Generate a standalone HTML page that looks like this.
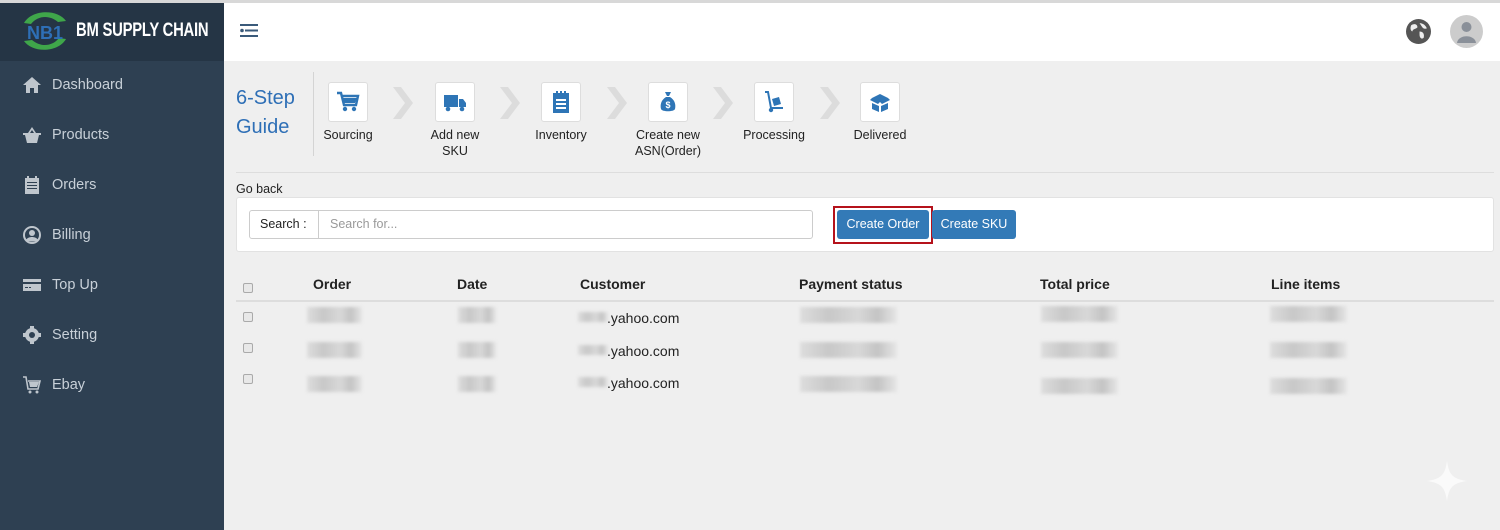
<!DOCTYPE html>
<html><head><meta charset="utf-8"><style>
*{box-sizing:border-box;margin:0;padding:0}
body{width:1500px;height:530px;overflow:hidden;background:#efefef;font-family:"Liberation Sans",Arial,sans-serif;position:relative}
.a{position:absolute}
#top{left:0;top:0;width:1500px;height:3px;background:#d8d8d8}
#side{left:0;top:3px;width:224px;height:527px;background:#2e4052}
#logo{left:0;top:3px;width:224px;height:58px;background:#253545}
.nav{position:absolute;left:22px;color:#c8d0d8;font-size:14.5px;display:flex;align-items:center}
.nav svg{width:20px;height:20px;margin-right:10px;fill:#bfc6cd}
#hdr{left:224px;top:3px;width:1276px;height:58px;background:#fff}
.step{position:absolute;top:82px;text-align:center;font-size:12.5px;color:#222;width:90px;line-height:16px}
.box{width:40px;height:40px;margin:0 auto 5px;background:#fff;border:1px solid #ddd;border-radius:3px;display:flex;align-items:center;justify-content:center}
.box svg{width:24px;height:24px;fill:#2e75b6}
.chev{position:absolute;top:86px;width:22px;height:34px}
.th{position:absolute;top:276px;font-weight:bold;font-size:14px;color:#222}
.cb{position:absolute;left:243px;width:10px;height:10px;border:1px solid #aaa;border-radius:2px;background:#e8e8e8}
.bl{position:absolute;height:16px;background:linear-gradient(90deg,#ddd,#c8c8c8 30%,#d8d8d8 60%,#c4c4c4 80%,#e6e6e6);filter:blur(1.5px)}
.em{position:absolute;font-size:14px;color:#222}
</style></head><body>
<div class="a" id="top"></div>
<div class="a" id="side"></div>
<div class="a" id="logo"></div>
<svg class="a" style="left:18px;top:9px" width="54" height="44" viewBox="0 0 54 44"><path d="M6 14 C14 0 40 0 48 12 L40 13 C32 6 20 6 13 15Z" fill="#3fa64a"/><path d="M48 30 C40 44 14 44 6 32 L14 31 C22 38 34 38 41 29Z" fill="#3fa64a"/><text x="9" y="30" font-family="Liberation Sans" font-weight="bold" font-size="18" fill="#2e6fb6" textLength="36" lengthAdjust="spacingAndGlyphs">NB1</text></svg>
<div class="a" style="left:76px;top:20px;color:#fff;font-weight:bold;font-size:19px;letter-spacing:-0.3px;transform:scaleX(0.78);transform-origin:left;white-space:nowrap">BM SUPPLY CHAIN</div>

<div class="nav" style="top:75px"><svg viewBox="0 0 20 20"><path d="M10 2 L1 10 H4 V18 H8 V13 H12 V18 H16 V10 H19Z"/></svg>Dashboard</div>
<div class="nav" style="top:125px"><svg viewBox="0 0 20 20"><path d="M1 8 H19 V10 H17 L15 18 H5 L3 10 H1Z M6 8 L10 2 L14 8 H12 L10 5 L8 8Z"/></svg>Products</div>
<div class="nav" style="top:175px"><svg viewBox="0 0 20 20"><path d="M3 3 H17 V19 H3Z M5 1 H7 V4 H5Z M13 1 H15 V4 H13Z" /><path d="M5 7 H15 V8 H5Z M5 10 H15 V11 H5Z M5 13 H15 V14 H5Z" fill="#2e4052"/></svg>Orders</div>
<div class="nav" style="top:225px"><svg viewBox="0 0 20 20"><circle cx="10" cy="10" r="9"/><circle cx="10" cy="10" r="7" fill="#2e4052"/><circle cx="10" cy="8" r="3"/><path d="M4 15 C6 11 14 11 16 15 C14 17 6 17 4 15Z"/></svg>Billing</div>
<div class="nav" style="top:275px"><svg viewBox="0 0 20 20"><path d="M1 4 H19 V16 H1Z"/><path d="M1 7 H19 V9 H1Z M3 12 H6 V13 H3Z M7 12 H9 V13 H7Z" fill="#2e4052"/></svg>Top Up</div>
<div class="nav" style="top:325px"><svg viewBox="0 0 20 20"><circle cx="10" cy="10" r="7"/><path d="M8 1H12V5H8Z M8 15H12V19H8Z M1 8H5V12H1Z M15 8H19V12H15Z" /><circle cx="10" cy="10" r="3" fill="#2e4052"/></svg>Setting</div>
<div class="nav" style="top:375px"><svg viewBox="0 0 20 20"><path d="M1 2 H4 L6 14 H16 L18 6 H6" fill="none" stroke="#bfc6cd" stroke-width="1.6"/><path d="M7 7 H17 L15 12 H8Z"/><circle cx="8" cy="17" r="1.5"/><circle cx="15" cy="17" r="1.5"/></svg>Ebay</div>

<div class="a" id="hdr"></div>
<svg class="a" style="left:240px;top:24px" width="20" height="14" viewBox="0 0 20 14"><rect x="0" y="0" width="18" height="2" fill="#3a5a7a"/><circle cx="2" cy="6.5" r="1.8" fill="#3a5a7a"/><rect x="5" y="5.5" width="13" height="2" fill="#3a5a7a"/><rect x="0" y="11" width="18" height="2" fill="#3a5a7a"/></svg>
<svg class="a" style="left:1406px;top:19px" width="25" height="25" viewBox="0 0 24 24"><circle cx="12" cy="12" r="12" fill="#555"/><path d="M5 6 C8 4 11 5 11 8 C9 10 7 9 6 12 C4 11 4 8 5 6Z M13 4 C16 4 19 6 20 9 C18 10 16 9 15 7Z M13 12 C16 12 18 14 17 18 C15 20 13 18 13 15Z" fill="#eee"/></svg>
<div class="a" style="left:1450px;top:15px;width:33px;height:33px;border-radius:50%;background:#ccc;overflow:hidden"><svg width="33" height="33" viewBox="0 0 33 33"><circle cx="16.5" cy="12" r="5" fill="#8a9099"/><path d="M7 28 C8 19 25 19 26 28Z" fill="#8a9099"/></svg></div>

<div class="a" style="left:236px;top:84px;color:#2e6fb6;font-size:20px;line-height:29px">6-Step<br>Guide</div>
<div class="a" style="left:313px;top:72px;width:1px;height:84px;background:#d4d4d4"></div>
<div class="a" style="left:236px;top:172px;width:1258px;height:1px;background:#ddd"></div>

<div class="step" style="left:303px"><div class="box"><svg viewBox="0 0 24 24"><path d="M1 3 H5 L8 15 H20 L22 6 H6" fill="none" stroke="#2e75b6" stroke-width="2.4"/><path d="M7 8 H21 L19 13 H8Z"/><circle cx="9" cy="19" r="2.2"/><circle cx="18" cy="19" r="2.2"/></svg></div>Sourcing</div>
<div class="step" style="left:410px"><div class="box"><svg viewBox="0 0 24 24"><path d="M1 5 H15 V17 H1Z M16 9 H20 L23 13 V17 H16Z"/><circle cx="5" cy="19" r="2.3"/><circle cx="19" cy="19" r="2.3"/></svg></div>Add new<br>SKU</div>
<div class="step" style="left:516px"><div class="box"><svg viewBox="0 0 24 24"><path d="M4 3 H20 V23 H4Z M7 1 H9 V5 H7Z M11 1 H13 V5 H11Z M15 1 H17 V5 H15Z"/><path d="M7 9 H17 V11 H7Z M7 13 H17 V15 H7Z M7 17 H17 V19 H7Z" fill="#fff"/></svg></div>Inventory</div>
<div class="step" style="left:623px"><div class="box"><svg viewBox="0 0 24 24"><path d="M9 2 H15 L13 6 H11Z M10 7 H14 C19 10 20 15 19 19 C18 22 6 22 5 19 C4 15 5 10 10 7Z"/><text x="12" y="18" font-size="9" font-weight="bold" fill="#fff" text-anchor="middle" font-family="Liberation Sans">$</text></svg></div>Create new<br>ASN(Order)</div>
<div class="step" style="left:729px"><div class="box"><svg viewBox="0 0 24 24"><path d="M3 2 H6 L9 18 H21" fill="none" stroke="#2e75b6" stroke-width="2"/><path d="M10 9 L17 7 L19 14 L12 16Z"/><circle cx="9" cy="20" r="2.2"/></svg></div>Processing</div>
<div class="step" style="left:835px"><div class="box"><svg viewBox="0 0 24 24"><path d="M12 4 L20 8 L12 12 L4 8Z M2 10 L10 14 L12 12 L4 8Z M22 10 L14 14 L12 12 L20 8Z M4 13 L11 16 V22 L4 19Z M20 13 L13 16 V22 L20 19Z"/></svg></div>Delivered</div>

<svg class="chev" style="left:392px" viewBox="0 0 22 34"><path d="M1 1 L9 1 L21 17 L9 33 L1 33 L13 17Z" fill="#dcdcdc"/></svg>
<svg class="chev" style="left:499px" viewBox="0 0 22 34"><path d="M1 1 L9 1 L21 17 L9 33 L1 33 L13 17Z" fill="#dcdcdc"/></svg>
<svg class="chev" style="left:606px" viewBox="0 0 22 34"><path d="M1 1 L9 1 L21 17 L9 33 L1 33 L13 17Z" fill="#dcdcdc"/></svg>
<svg class="chev" style="left:712px" viewBox="0 0 22 34"><path d="M1 1 L9 1 L21 17 L9 33 L1 33 L13 17Z" fill="#dcdcdc"/></svg>
<svg class="chev" style="left:819px" viewBox="0 0 22 34"><path d="M1 1 L9 1 L21 17 L9 33 L1 33 L13 17Z" fill="#dcdcdc"/></svg>

<div class="a" style="left:236px;top:182px;font-size:12.5px;color:#222">Go back</div>
<div class="a" style="left:236px;top:197px;width:1258px;height:55px;background:#fff;border:1px solid #e2e2e2;border-radius:3px"></div>
<div class="a" style="left:249px;top:210px;width:564px;height:29px;background:#fff;border:1px solid #ccc;border-radius:3px"></div>
<div class="a" style="left:249px;top:210px;width:70px;height:29px;border-right:1px solid #ccc;font-size:12.5px;color:#222;line-height:29px;padding-left:11px">Search :</div>
<div class="a" style="left:330px;top:210px;font-size:12.5px;color:#999;line-height:29px">Search for...</div>
<div class="a" style="left:833px;top:206px;width:100px;height:38px;border:2px solid #b5121b"></div>
<div class="a" style="left:837px;top:210px;width:92px;height:29px;background:#337ab7;border-radius:3px;color:#fff;font-size:12.5px;line-height:29px;text-align:center">Create Order</div>
<div class="a" style="left:932px;top:210px;width:84px;height:29px;background:#337ab7;border-radius:3px;color:#fff;font-size:12.5px;line-height:29px;text-align:center">Create SKU</div>

<div class="cb" style="top:283px"></div>
<div class="th" style="left:313px">Order</div>
<div class="th" style="left:457px">Date</div>
<div class="th" style="left:580px">Customer</div>
<div class="th" style="left:799px">Payment status</div>
<div class="th" style="left:1040px">Total price</div>
<div class="th" style="left:1271px">Line items</div>
<div class="a" style="left:236px;top:300px;width:1258px;height:2px;background:#ddd"></div>

<div class="cb" style="top:312px"></div><div class="cb" style="top:343px"></div><div class="cb" style="top:374px"></div>
<div class="bl" style="left:307px;top:307px;width:55px"></div><div class="bl" style="left:307px;top:342px;width:55px"></div><div class="bl" style="left:307px;top:376px;width:55px"></div>
<div class="bl" style="left:458px;top:307px;width:38px"></div><div class="bl" style="left:458px;top:342px;width:38px"></div><div class="bl" style="left:458px;top:376px;width:38px"></div>
<div class="bl" style="left:578px;top:312px;width:30px;height:10px"></div><div class="bl" style="left:578px;top:345px;width:30px;height:10px"></div><div class="bl" style="left:578px;top:377px;width:30px;height:10px"></div>
<div class="em" style="left:607px;top:310px">.yahoo.com</div><div class="em" style="left:607px;top:343px">.yahoo.com</div><div class="em" style="left:607px;top:375px">.yahoo.com</div>
<div class="bl" style="left:800px;top:307px;width:97px"></div><div class="bl" style="left:800px;top:342px;width:97px"></div><div class="bl" style="left:800px;top:376px;width:97px"></div>
<div class="bl" style="left:1041px;top:306px;width:77px"></div><div class="bl" style="left:1041px;top:342px;width:77px"></div><div class="bl" style="left:1041px;top:378px;width:77px"></div>
<div class="bl" style="left:1270px;top:306px;width:77px"></div><div class="bl" style="left:1270px;top:342px;width:77px"></div><div class="bl" style="left:1270px;top:378px;width:77px"></div>

<svg class="a" style="left:1427px;top:461px" width="40" height="40" viewBox="0 0 40 40"><path d="M20 0 C22 14 26 18 40 20 C26 22 22 26 20 40 C18 26 14 22 0 20 C14 18 18 14 20 0Z" fill="#fafafa"/></svg>
</body></html>
